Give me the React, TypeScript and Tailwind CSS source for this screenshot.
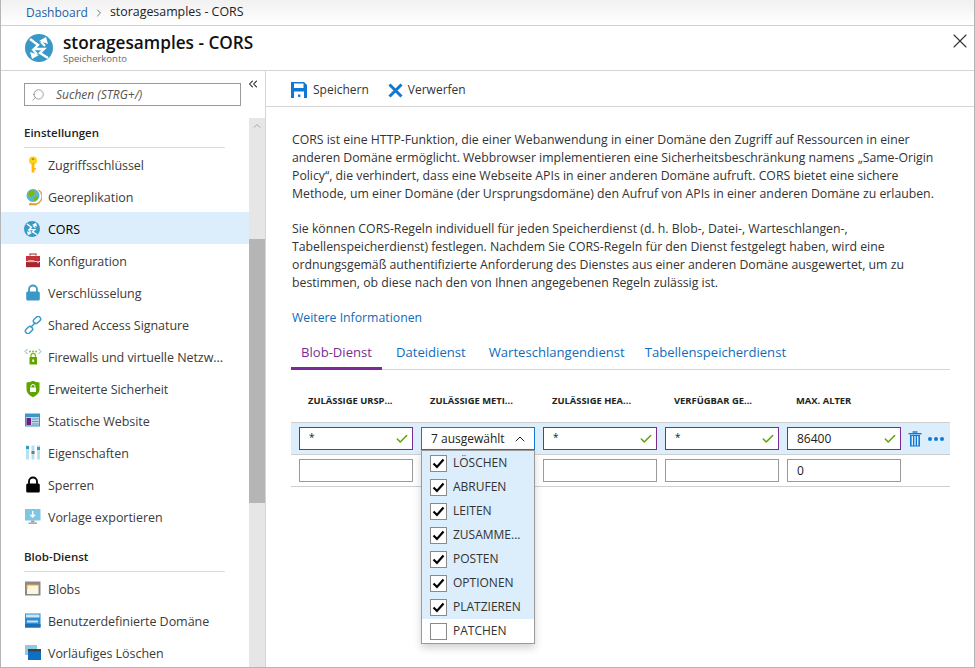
import { ReactNode } from "react";
import { Check, ChevronUp, ChevronRight, ChevronsLeft, X, Search } from "lucide-react";

const font = { fontFamily: '"Open Sans", "Noto Sans", sans-serif' };

const CorsIcon = ({ size = 18 }: { size?: number }) => (
  <svg width={size} height={size} viewBox="0 0 28 28" fill="none">
    <circle cx="14" cy="14" r="14" fill="#3999c6" />
    <path d="M5 5 L13 11 L9 15 L19 15 L15 19 L23 24" stroke="#fff" strokeWidth="2.4" />
    <path d="M14 7 L21 3 L23 10 Z M14 21 L7 25 L5 18 Z" fill="#fff" />
    <path d="M16 8 L20 12 M12 20 L8 16" stroke="#fff" strokeWidth="2" />
  </svg>
);

const icons: Record<string, ReactNode> = {
  key: (
    <svg width="18" height="18" viewBox="0 0 18 18">
      <circle cx="9" cy="4.5" r="4" fill="#fcd116" />
      <rect x="7.6" y="7" width="2.8" height="9.5" fill="#ffb900" />
      <rect x="10" y="12" width="2" height="1.6" fill="#ffb900" />
      <rect x="7.8" y="2.4" width="2.4" height="1.4" fill="#a67c00" />
    </svg>
  ),
  globe: (
    <svg width="18" height="18" viewBox="0 0 18 18">
      <circle cx="9" cy="7.5" r="6.5" fill="#59b4d9" />
      <path d="M5 3 L10 2 L11 6 L7 9 L4 7 Z M10 9 L14 8 L13 12 L10 13 Z" fill="#7fba00" />
      <path d="M14.5 2 A7.5 7.5 0 0 1 6 15" stroke="#e8a33d" strokeWidth="1.4" fill="none" />
      <rect x="5" y="15.5" width="8" height="1.8" fill="#d8a530" />
    </svg>
  ),
  cors: <CorsIcon size={16} />,
  tool: (
    <svg width="18" height="18" viewBox="0 0 18 18">
      <path d="M6 3.5 V2 H12 V3.5" stroke="#a4262c" strokeWidth="1.2" fill="none" />
      <rect x="2" y="4" width="14" height="5" fill="#c4323a" />
      <rect x="2" y="9.8" width="14" height="5.4" fill="#a4262c" />
      <rect x="4" y="8" width="6" height="2.2" fill="#f0a0a0" />
      <rect x="13" y="9" width="2" height="2.2" fill="#b4a0ff" />
    </svg>
  ),
  lock: (
    <svg width="18" height="18" viewBox="0 0 18 18">
      <path d="M5 8 V5.5 A4 4 0 0 1 13 5.5 V8" stroke="#3999c6" strokeWidth="1.8" fill="none" />
      <rect x="2.2" y="7.5" width="13.6" height="9" rx="1.5" fill="#3999c6" />
    </svg>
  ),
  link: (
    <svg width="18" height="18" viewBox="0 0 18 18" fill="none" stroke="#3999c6" strokeWidth="1.5">
      <rect x="9" y="1.5" width="8" height="5" rx="2.5" transform="rotate(-45 13 4)" />
      <rect x="1" y="11.5" width="8" height="5" rx="2.5" transform="rotate(-45 5 14)" />
      <path d="M6.5 11.5 L11.5 6.5" />
    </svg>
  ),
  firewall: (
    <svg width="18" height="18" viewBox="0 0 18 18">
      <path d="M3.5 1 L1 3.5 L3.5 6 M14.5 1 L17 3.5 L14.5 6" stroke="#59b4d9" strokeWidth="1" fill="none" />
      <circle cx="6" cy="3.5" r="0.9" fill="#7fba00" />
      <circle cx="9" cy="3.5" r="0.9" fill="#7fba00" />
      <circle cx="12" cy="3.5" r="0.9" fill="#7fba00" />
      <path d="M7 9 V7.5 A2.2 2.2 0 0 1 11.4 7.5 V9" stroke="#7fba00" strokeWidth="1.2" fill="none" />
      <rect x="5.5" y="9" width="7.5" height="7.5" rx="0.6" fill="#5ea500" />
      <rect x="8.3" y="11.5" width="1.8" height="2.4" fill="#fff" />
    </svg>
  ),
  shield: (
    <svg width="18" height="18" viewBox="0 0 18 18">
      <path d="M2.5 2.5 Q6 2.5 9 0.8 Q12 2.5 15.5 2.5 V10 Q15 14.5 9 17.2 Q3 14.5 2.5 10 Z" fill="#5ea500" />
      <path d="M7 7.5 V6.5 A2 2 0 0 1 11 6.5 V7.5" stroke="#fff" strokeWidth="1" fill="none" />
      <rect x="6" y="7.5" width="6" height="4.5" fill="#fff" />
    </svg>
  ),
  web: (
    <svg width="18" height="18" viewBox="0 0 18 18">
      <rect x="1" y="1.5" width="15" height="13" fill="#3999c6" />
      <rect x="2" y="5" width="13" height="8.5" fill="#b9d9ee" />
      <rect x="2.5" y="6" width="4.5" height="7" fill="#68217a" />
      <path d="M8 7 H14.5 M8 9.5 H14.5 M8 12 H14.5" stroke="#7a8fa8" strokeWidth="1" />
    </svg>
  ),
  props: (
    <svg width="18" height="18" viewBox="0 0 18 18">
      <rect x="2" y="1.5" width="3" height="14" fill="#b9e0ef" />
      <rect x="7.5" y="1.5" width="3" height="14" fill="#b9e0ef" />
      <rect x="13" y="1.5" width="3" height="14" fill="#b9e0ef" />
      <rect x="2" y="2" width="3" height="3" fill="#3999c6" />
      <rect x="7.5" y="7" width="3" height="3" fill="#7a7a7a" />
      <rect x="13" y="3" width="3" height="3" fill="#3999c6" />
    </svg>
  ),
  blackLock: (
    <svg width="18" height="18" viewBox="0 0 18 18">
      <path d="M5 8 V5.5 A4 4 0 0 1 13 5.5 V8" stroke="#000" strokeWidth="1.8" fill="none" />
      <rect x="2.2" y="7.5" width="13.6" height="9" rx="1.5" fill="#000" />
    </svg>
  ),
  export: (
    <svg width="18" height="18" viewBox="0 0 18 18">
      <rect x="1" y="1" width="15.5" height="11.5" fill="#7fc6e4" />
      <path d="M8.7 3 V9 M6.3 6.8 L8.7 9.2 L11.1 6.8" stroke="#fff" strokeWidth="1.3" fill="none" />
      <rect x="7" y="12.5" width="3.5" height="2" fill="#a0a0a0" />
      <rect x="4.5" y="14.5" width="8.5" height="1.4" fill="#a0a0a0" />
    </svg>
  ),
  blobs: (
    <svg width="18" height="18" viewBox="0 0 18 18">
      <rect x="1" y="1.5" width="15.5" height="14" fill="#8a8a8a" />
      <rect x="3" y="5" width="11.5" height="9" fill="#fff6e0" />
      <path d="M3 5 H14.5 M3 5 V9" stroke="#f5a623" strokeWidth="1" />
    </svg>
  ),
  domain: (
    <svg width="18" height="18" viewBox="0 0 18 18">
      <rect x="1" y="1.5" width="15.5" height="14" fill="#2f8fd0" />
      <rect x="2" y="2.5" width="13.5" height="3" fill="#cfe6f5" />
      <rect x="3" y="8.5" width="11" height="2" fill="#fff" opacity="0.75" />
      <rect x="1" y="12" width="15.5" height="3.5" fill="#1a6fb5" />
    </svg>
  ),
  softDelete: (
    <svg width="18" height="18" viewBox="0 0 18 18">
      <rect x="1" y="1" width="12" height="10" fill="#8ccbe6" />
      <rect x="4" y="5" width="13" height="11" fill="#0f6fc0" />
      <rect x="4" y="5" width="13" height="2.4" fill="#404040" />
    </svg>
  ),
};

const settings = [
  ["key", "Zugriffsschlüssel"],
  ["globe", "Georeplikation"],
  ["cors", "CORS"],
  ["tool", "Konfiguration"],
  ["lock", "Verschlüsselung"],
  ["link", "Shared Access Signature"],
  ["firewall", "Firewalls und virtuelle Netzw..."],
  ["shield", "Erweiterte Sicherheit"],
  ["web", "Statische Website"],
  ["props", "Eigenschaften"],
  ["blackLock", "Sperren"],
  ["export", "Vorlage exportieren"],
];

const blobItems = [
  ["blobs", "Blobs"],
  ["domain", "Benutzerdefinierte Domäne"],
  ["softDelete", "Vorläufiges Löschen"],
];

const methods = ["LÖSCHEN", "ABRUFEN", "LEITEN", "ZUSAMME...", "POSTEN", "OPTIONEN", "PLATZIEREN"];

const NavItem = ({ icon, label }: { icon: string; label: string }) => (
  <div
    className={`flex h-8 shrink-0 items-center pt-[4px] pl-[23px] text-[12.5px] tracking-[-0.05px] ${
      label === "CORS" ? "bg-[#dcedfb] text-black" : "text-[#3b3b3b]"
    }`}
  >
    <span className="mt-[-3px] flex w-[24px] shrink-0">{icons[icon]}</span>
    {label}
  </div>
);

const SectionTitle = ({ children, className }: { children: ReactNode; className: string }) => (
  <div className={`${className} mr-[24px] ml-[23px] h-[23px] shrink-0 border-b border-[#dcdcdc] text-[11.5px] font-semibold text-[#222]`}>
    {children}
  </div>
);

const Field = ({ value, valid }: { value?: string; valid?: boolean }) => (
  <div
    className={`flex h-[23px] w-[114px] shrink-0 items-center justify-between border bg-white pr-[3px] pl-[9px] text-[#1a1a1a] ${
      valid ? "border-[#7a2c96]" : "border-[#9a9a9a]"
    } ${value === "*" ? "text-[10px]" : "text-[12px]"}`}
  >
    <span className={value === "*" ? "mt-[-3px]" : ""}>{value}</span>
    {valid && <Check size={14} strokeWidth={2.6} className="text-[#5ea500]" />}
  </div>
);

const Header = ({ children }: { children: ReactNode }) => (
  <div className="w-[114px] shrink-0 pl-[9px] text-[9.4px] font-bold text-[#222]">{children}</div>
);

const Box = ({ checked }: { checked: boolean }) => (
  <span className="flex h-[17px] w-[17px] shrink-0 items-center justify-center border border-[#8a8a8a] bg-white">
    {checked && (
      <svg width="13" height="13" viewBox="0 0 13 13" fill="none">
        <path d="M1.5 6.5 L5 10 L11.5 2.5" stroke="#000" strokeWidth="2.2" />
      </svg>
    )}
  </span>
);

const MethodRow = ({ label, checked }: { label: string; checked: boolean }) => (
  <div className={`flex h-6 items-center gap-[6px] pl-2 text-[12px] text-[#333] ${checked ? "bg-[#dcedfb]" : "bg-white"}`}>
    <Box checked={checked} />
    {label}
  </div>
);

export default function App() {
  return (
    <div style={font} className="flex h-[668px] w-[975px] flex-col overflow-hidden border-x border-b border-[#b5b5b5] bg-white">
      {/* breadcrumb */}
      <div className="flex h-[26px] shrink-0 items-center border-b border-[#cfcfcf] bg-gradient-to-b from-[#f1f1f1] to-white pl-[25px] text-[12px]">
        <span className="text-[#1a5fa8]">Dashboard</span>
        <ChevronRight size={12} className="mx-[5px] text-[#777]" />
        <span className="text-[12.4px] text-[#222]">storagesamples - CORS</span>
      </div>

      {/* blade title */}
      <div className="flex h-[45px] shrink-0 items-center border-b border-[#d5d5d5] pl-[24px]">
        <CorsIcon size={28} />
        <div className="ml-[10px] flex flex-col">
          <span className="text-[17.2px] leading-[21px] font-semibold text-[#111]">storagesamples - CORS</span>
          <span className="text-[9.5px] leading-[12px] text-[#666]">Speicherkonto</span>
        </div>
        <X size={24} strokeWidth={1.1} className="mt-[-14px] mr-[2px] ml-auto text-[#333]" />
      </div>

      <div className="flex min-h-0 flex-1">
        {/* sidebar */}
        <div className="flex w-[265px] shrink-0 flex-col border-r border-[#d5d5d5]">
          <div className="flex h-[47px] shrink-0 items-start">
            <div className="mt-[12px] ml-[23px] flex h-[23px] w-[217px] items-center border border-[#9a9a9a] pl-[6px] text-[12px] text-[#555] italic">
              <Search size={14} strokeWidth={1.2} className="mr-[11px] -scale-x-100 text-[#777]" />
              Suchen (STRG+/)
            </div>
            <ChevronsLeft size={14} strokeWidth={1.8} className="mt-[6px] ml-[5px] text-[#222]" />
          </div>
          <div className="flex min-h-0 flex-1">
            <div className="flex min-w-0 flex-1 flex-col overflow-hidden">
              <SectionTitle className="mt-[7px] leading-[16px]">Einstellungen</SectionTitle>
              {settings.map(([icon, label]) => (
                <NavItem key={label} icon={icon} label={label} />
              ))}
              <SectionTitle className="mt-[17px] leading-[16px]">Blob-Dienst</SectionTitle>
              {blobItems.map(([icon, label]) => (
                <NavItem key={label} icon={icon} label={label} />
              ))}
            </div>
            {/* scrollbar */}
            <div className="flex w-[16px] shrink-0 flex-col bg-[#e6e6e6]">
              <div className="flex h-[16px] shrink-0 items-center justify-center">
                <ChevronUp size={12} className="text-[#aaa]" />
              </div>
              <div className="mt-[105px] h-[264px] shrink-0 bg-[#b5b5b5]" />
            </div>
          </div>
        </div>

        {/* content */}
        <div className="flex min-w-0 flex-1 flex-col">
          <div className="flex h-[36px] shrink-0 items-center border-b border-[#d5d5d5] pt-[3px] pl-[25px] text-[12px] text-[#333]">
            <svg width="16" height="16" viewBox="0 0 16 16" className="mr-[6px]">
              <path d="M0 0 H13 L16 3 V16 H0 Z" fill="#0f78d4" />
              <rect x="3" y="1.5" width="9.5" height="4.5" fill="#fff" />
              <rect x="3" y="9.5" width="10" height="6.5" fill="#fff" />
              <rect x="7" y="12.5" width="2.4" height="2.4" fill="#0f78d4" />
            </svg>
            Speichern
            <svg width="15" height="15" viewBox="0 0 15 15" className="mr-[5px] ml-[19px]">
              <path d="M1.5 1.5 L13.5 13.5 M13.5 1.5 L1.5 13.5" stroke="#0f78d4" strokeWidth="3" />
            </svg>
            Verwerfen
          </div>

          <div className="pt-[24px] pr-[20px] pl-[26px]">
            <p className="text-[12.28px] leading-[18px] whitespace-nowrap text-[#333]">
              CORS ist eine HTTP-Funktion, die einer Webanwendung in einer Domäne den Zugriff auf Ressourcen in einer
              <br />
              anderen Domäne ermöglicht. Webbrowser implementieren eine Sicherheitsbeschränkung namens „Same-Origin
              <br />
              Policy“, die verhindert, dass eine Webseite APIs in einer anderen Domäne aufruft. CORS bietet eine sichere
              <br />
              Methode, um einer Domäne (der Ursprungsdomäne) den Aufruf von APIs in einer anderen Domäne zu erlauben.
            </p>
            <p className="mt-[17px] text-[12.28px] leading-[18px] whitespace-nowrap text-[#333]">
              Sie können CORS-Regeln individuell für jeden Speicherdienst (d. h. Blob-, Datei-, Warteschlangen-,
              <br />
              Tabellenspeicherdienst) festlegen. Nachdem Sie CORS-Regeln für den Dienst festgelegt haben, wird eine
              <br />
              ordnungsgemäß authentifizierte Anforderung des Dienstes aus einer anderen Domäne ausgewertet, um zu
              <br />
              bestimmen, ob diese nach den von Ihnen angegebenen Regeln zulässig ist.
            </p>
            <div className="mt-[17px] text-[12.28px] leading-[18px] text-[#0f6cbd]">Weitere Informationen</div>

            {/* tabs */}
            <div className="mt-[17px] -ml-px flex h-[26px] w-[659px] border-b border-[#d5d5d5] text-[13.1px] leading-[17px] text-[#0f6cbd]">
              <span className="h-[26px] border-b-[3px] border-[#7a2c96] pr-[10px] pl-[10px] text-[#7a2c96]">Blob-Dienst</span>
              <span className="ml-[14px]">Dateidienst</span>
              <span className="ml-[23px]">Warteschlangendienst</span>
              <span className="ml-[20px]">Tabellenspeicherdienst</span>
            </div>

            {/* grid headers */}
            <div className="mt-[24px] flex gap-2 pl-[7px] leading-[14px]">
              <Header>ZULÄSSIGE URSP...</Header>
              <Header>ZULÄSSIGE METI...</Header>
              <Header>ZULÄSSIGE HEA...</Header>
              <Header>VERFÜGBAR GE...</Header>
              <Header>MAX. ALTER</Header>
            </div>

            {/* row 1 */}
            <div className="mt-[14px] -ml-px flex h-[33px] w-[659px] items-center gap-2 border-y border-[#cfcfcf] bg-[#dcedfb] pl-2">
              <Field value="*" valid />
              <div className="relative h-[23px] w-[114px] shrink-0">
                <div className="flex h-[23px] items-center justify-between border border-[#0f78d4] bg-white pr-[6px] pl-[9px] text-[12px] text-[#222]">
                  7 ausgewählt
                  <ChevronUp size={16} strokeWidth={1.5} className="text-[#222]" />
                </div>
                <div className="absolute top-[23px] left-0 z-10 w-[114px] border border-[#9a9a9a] bg-white shadow-[0_4px_8px_rgba(0,0,0,0.18)]">
                  {methods.map((m) => (
                    <MethodRow key={m} label={m} checked />
                  ))}
                  <MethodRow label="PATCHEN" checked={false} />
                </div>
              </div>
              <Field value="*" valid />
              <Field value="*" valid />
              <Field value="86400" valid />
              <svg width="14" height="16" viewBox="0 0 14 16" className="ml-[-1px] shrink-0" fill="#0f78d4">
                <rect x="0.5" y="2" width="13" height="1.4" />
                <rect x="4.5" y="0.3" width="5" height="1.4" />
                <path d="M2 4 H12 V15.5 H2 Z M3.6 5 V14.5 H5 V5 Z M6.3 5 V14.5 H7.7 V5 Z M9 5 V14.5 H10.4 V5 Z" fillRule="evenodd" />
              </svg>
              <span className="ml-[-2px] flex gap-[2px]">
                <i className="h-1 w-1 rounded-full bg-[#0f78d4]" />
                <i className="h-1 w-1 rounded-full bg-[#0f78d4]" />
                <i className="h-1 w-1 rounded-full bg-[#0f78d4]" />
              </span>
            </div>

            {/* row 2 */}
            <div className="-ml-px flex h-[32px] w-[659px] items-center gap-2 border-b border-[#cfcfcf] pl-2">
              <Field />
              <Field />
              <Field />
              <Field />
              <Field value="0" />
            </div>
          </div>
        </div>
      </div>
    </div>
  );
}
